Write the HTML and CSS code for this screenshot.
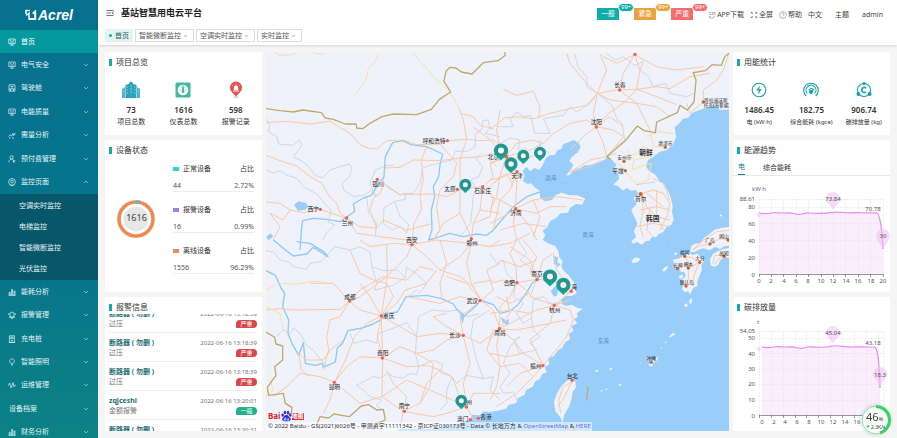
FILE: index.html
```html
<!DOCTYPE html>
<html lang="zh-CN">
<head>
<meta charset="utf-8">
<title>基站智慧用电云平台</title>
<link rel="stylesheet" href="styles.css">
</head>
<body>
<svg class="defs" aria-hidden="true">
  <symbol id="down" viewBox="0 0 6 6"><path d="M1 2l2 2 2-2"/></symbol>
  <symbol id="up" viewBox="0 0 6 6"><path d="M1 4l2-2 2 2"/></symbol>
  <symbol id="screen" viewBox="0 0 8 8"><path d="M.8 1h6.4v4.6H.8zM2.2 7.2h3.6M4 5.6v1.6M2.2 2.4h1.6M2.2 4h3.6M5 2.4h1"/></symbol>
  <symbol id="cabin" viewBox="0 0 8 8"><path d="M1 .8h6v6.4H1zM1 5h6M2.5 5v2M5.5 5v2M2.5 2.4h3M4 2.4V5"/></symbol>
  <symbol id="trend" viewBox="0 0 8 8"><path d="M.6 5.6l1.6-2 1.4 1.6L5 2.2l.9 2.4L7.4 2M1 7h1.6M4 7h2"/></symbol>
  <symbol id="user" viewBox="0 0 8 8"><circle cx="3.6" cy="2.4" r="1.7"/><path d="M.9 7.4c0-4 4.4-4 4.8-1.8M5 5.2l1 1.2 1.2-1.2M6 6.4v1.2M5 6.6h2"/></symbol>
  <symbol id="target" viewBox="0 0 8 8"><circle cx="4" cy="3.9" r="3.4"/><circle cx="4" cy="3.6" r="1.4"/><path d="M2.3 7.4h3.4"/></symbol>
  <symbol id="bars" viewBox="0 0 8 8"><path d="M1.2 7V4.2h1V7zM3.6 7V1.4h1V7zM6 7V3h1v4zM.6 7.4h7"/></symbol>
  <symbol id="bell" viewBox="0 0 8 8"><path d="M2 6V2q2-2 4 0v4zM1 6.2h6M3 7.4h2M.8 2v2M7.2 2v2"/></symbol>
  <symbol id="pile" viewBox="0 0 8 8"><path d="M1.4.8h5v6.6h-5zM.8 7.4h6.4M2.6 2.2h2.6v1.4H2.6zM4 4.6l-.8 1h1.4l-.8 1"/></symbol>
  <symbol id="bulb" viewBox="0 0 8 8"><path d="M3 5.4C.4 3.6 2 .8 4 .8s3.6 2.8 1 4.600zM3.200 6.600h1.600M3.600 7.400h.8"/></symbol>
  <symbol id="pulse" viewBox="0 0 8 8"><path d="M.4 4.600L1.600 2l1.600 5L5 1.600l1.200 4.200 1.200-2.200"/></symbol>
</svg>
<div class="app">
  <aside class="sidebar">
    <div class="logo">
      <svg class="logo-mark" viewBox="0 0 12 12"><path d="M1 5V1.600h4M1 6.500l3-2.300v5.600h6V2.200L7.600 4.600" fill="none" stroke="#fff" stroke-width="1.500"/><path d="M3 11h8.200V1L9.600 2.600v6.800H4.600z" fill="#fff"/></svg>
      <span>Acrel</span>
    </div>
    <nav>
      <ul class="menu">
        <li><a class="row active" href="#"><svg class="ico"><use href="#screen"/></svg><span>首页</span></a></li>
        <li><a class="row" href="#"><svg class="ico"><use href="#screen"/></svg><span>电气安全</span><svg class="arrow"><use href="#down"/></svg></a></li>
        <li><a class="row" href="#"><svg class="ico"><use href="#cabin"/></svg><span>驾驶舱</span><svg class="arrow"><use href="#down"/></svg></a></li>
        <li><a class="row" href="#"><svg class="ico"><use href="#screen"/></svg><span>电能质量</span><svg class="arrow"><use href="#down"/></svg></a></li>
        <li><a class="row" href="#"><svg class="ico"><use href="#trend"/></svg><span>需量分析</span><svg class="arrow"><use href="#down"/></svg></a></li>
        <li><a class="row" href="#"><svg class="ico"><use href="#user"/></svg><span>预付费管理</span><svg class="arrow"><use href="#down"/></svg></a></li>
        <li><a class="row" href="#"><svg class="ico"><use href="#target"/></svg><span>监控页面</span><svg class="arrow"><use href="#up"/></svg></a>
          <ul class="submenu">
            <li><a href="#">空调实时监控</a></li>
            <li><a href="#">电梯监控</a></li>
            <li><a href="#">智能微断监控</a></li>
            <li><a href="#">光伏监控</a></li>
          </ul>
        </li>
        <li><a class="row" href="#"><svg class="ico"><use href="#bars"/></svg><span>能耗分析</span><svg class="arrow"><use href="#down"/></svg></a></li>
        <li><a class="row" href="#"><svg class="ico"><use href="#bell"/></svg><span>报警管理</span><svg class="arrow"><use href="#down"/></svg></a></li>
        <li><a class="row" href="#"><svg class="ico"><use href="#pile"/></svg><span>充电桩</span><svg class="arrow"><use href="#down"/></svg></a></li>
        <li><a class="row" href="#"><svg class="ico"><use href="#bulb"/></svg><span>智能照明</span><svg class="arrow"><use href="#down"/></svg></a></li>
        <li><a class="row" href="#"><svg class="ico"><use href="#pulse"/></svg><span>运维管理</span><svg class="arrow"><use href="#down"/></svg></a></li>
        <li><a class="row" href="#"><span>设备档案</span><svg class="arrow"><use href="#down"/></svg></a></li>
        <li><a class="row" href="#"><svg class="ico"><use href="#bars"/></svg><span>财务分析</span><svg class="arrow"><use href="#down"/></svg></a></li>
      </ul>
    </nav>
  </aside>

  <div class="main">
    <header class="header">
      <div class="topbar">
        <button class="fold" aria-label="折叠菜单"><svg viewBox="0 0 8 8"><path d="M.3 1.500h7.400M.3 4H5M.3 6.500h7.400M7.600 2.800L6 4l1.600 1.200"/></svg></button>
        <h1>基站智慧用电云平台</h1>
        <div class="levels">
          <button class="level teal">一般<i>99+</i></button>
          <button class="level amber">紧急<i>99+</i></button>
          <button class="level coral">严重<i>99+</i></button>
        </div>
        <div class="tools">
          <a href="#"><svg viewBox="0 0 8 8"><path d="M1 1.500h2M1 3.500h2M1 5.500h2M4.500 1.500h2.500v1.800H4.500zM4.500 5h1M6.500 5v1.500M1 7h5"/></svg>APP下载</a>
          <a href="#"><svg class="dark" viewBox="0 0 8 8"><path d="M1.500 1.500l1.300 1.300M6.500 1.500L5.200 2.800M1.500 6.500l1.300-1.300M6.500 6.500L5.200 5.200M1.300 2.400V1.300h1.100M5.600 1.300h1.100v1.100M1.300 5.600v1.100h1.100M5.600 6.700h1.100V5.600"/></svg>全屏</a>
          <a href="#"><svg viewBox="0 0 8 8"><circle cx="4" cy="4" r="3.400"/><path d="M3 3.200q0-1 1-1t1 1q0 .6-1 1.200v.6M4 5.600v.6"/></svg>帮助</a>
          <a href="#">中文</a>
          <a class="wide" href="#">主题</a>
          <a class="wide" href="#">admin</a>
        </div>
      </div>
      <div class="tabs">
        <a class="tab current" href="#"><i class="dot"></i>首页</a>
        <a class="tab" href="#">智能微断监控<i class="x">×</i></a>
        <a class="tab" href="#">空调实时监控<i class="x">×</i></a>
        <a class="tab" href="#">实时监控<i class="x">×</i></a>
      </div>
    </header>

    <main class="board">
      <div class="column">
        <section class="card">
          <h2>项目总览</h2>
          <div class="stats">
            <div class="stat">
              <svg viewBox="0 0 18 18"><path d="M0 17V8l3-2v11zM15 17V6l3 2v9z" fill="#4fb3cf"/><path d="M3.500 17V4l3.500-1v14zM11 17V3l3.500 1v13z" fill="#2b9dc0"/><path d="M7 17V2l2-1.500L11 2v15z" fill="#2aa7b7"/><path d="M4.700 6h1M4.700 9h1M4.700 12h1M8.500 5h1M8.500 8h1M8.500 11h1M12.300 6h1M12.300 9h1M12.300 12h1M1.200 10h.8M16 10h.8" stroke="#bfe9f2" stroke-width="1.200"/></svg>
              <b>73</b><span>项目总数</span>
            </div>
            <div class="stat">
              <svg viewBox="0 0 18 18"><rect x="1.500" y="1.500" width="15" height="15" rx="1.500" fill="#43b99c"/><circle cx="9" cy="9" r="5.300" fill="#fff"/><path d="M9 4.500l1 5.500H8zM5.600 9h1M11.400 9h1M6.500 6l.7.7M11.500 6l-.7.7" fill="#43b99c" stroke="#43b99c" stroke-width=".7"/><circle cx="9" cy="10.800" r="1.300" fill="#43b99c"/></svg>
              <b>1616</b><span>仪表总数</span>
            </div>
            <div class="stat">
              <svg viewBox="0 0 18 18"><ellipse cx="9" cy="16.200" rx="2.500" ry="1" fill="#f9c9c9"/><path d="M9 16C7.500 13 3 11 3 6.600a6 6 0 0 1 12 0C15 11 10.500 13 9 16z" fill="#e8504f"/><path d="M6.800 9V6.800a2.200 2.200 0 0 1 4.400 0V9zM6 9.400h6v1H6z" fill="#fff"/><path d="M9 2.600v1M5.300 4.200l.8.7M12.700 4.200l-.8.7" stroke="#fff" stroke-width=".7"/></svg>
              <b>598</b><span>报警记录</span>
            </div>
          </div>
        </section>

        <section class="card">
          <h2>设备状态</h2>
          <div class="status">
            <svg class="donut" viewBox="0 0 38 38">
              <circle cx="19" cy="19" r="17" fill="none" stroke="#ef8b4f" stroke-width="3.600"/>
              <circle cx="19" cy="19" r="17" fill="none" stroke="#27d3e8" stroke-width="3.600" pathLength="100" stroke-dasharray="2.720 97.280" transform="rotate(-90 19 19)"/>
              <circle cx="19" cy="19" r="17" fill="none" stroke="#9b82ea" stroke-width="3.600" pathLength="100" stroke-dasharray="1 99" transform="rotate(-80 19 19)"/>
              <circle cx="19" cy="19" r="12.500" fill="#e6e6e6"/>
              <text x="19.500" y="21" text-anchor="middle">1616</text>
            </svg>
            <dl class="kinds">
              <div><dt><i class="sw cyan"></i>正常设备<em>占比</em></dt><dd>44<em>2.72%</em></dd></div>
              <div><dt><i class="sw violet"></i>报警设备<em>占比</em></dt><dd>16<em>0.99%</em></dd></div>
              <div><dt><i class="sw orange"></i>离线设备<em>占比</em></dt><dd>1556<em>96.29%</em></dd></div>
            </dl>
          </div>
        </section>

        <section class="card">
          <h2>报警信息</h2>
          <div class="alarms">
            <ul>
              <li><p><b>断路器 ( 勿删 )</b><time>2022-06-16 13:18:39</time></p><p>过压<span class="tag">严重</span></p></li>
              <li><p><b>断路器 ( 勿删 )</b><time>2022-06-16 13:18:39</time></p><p>过压<span class="tag">严重</span></p></li>
              <li><p><b>断路器 ( 勿删 )</b><time>2022-06-16 13:18:39</time></p><p>过压<span class="tag">严重</span></p></li>
              <li><p><b>zqjceshi</b><time>2022-06-16 13:20:01</time></p><p>金额报警<span class="tag mild">一般</span></p></li>
              <li><p><b>断路器 ( 勿删 )</b><time>2022-06-16 13:20:31</time></p></li>
            </ul>
          </div>
        </section>
      </div>

      <section class="map" aria-label="地图">
        <svg class="canvas" viewBox="18 6 1389 1137" preserveAspectRatio="xMidYMid slice">
          <defs>
            <g id="pin"><path d="M0 24C-7 16-18 11-18-1a18 18 0 0 1 36 0C18 11 7 16 0 24z" fill="#12a79b"/><circle cy="-1" r="15" fill="#2a918d"/><circle cy="-1" r="7.500" fill="#eef6fb"/></g>
          </defs>
          <!-- sea, islands and lakes -->
          <path class="sea" transform="translate(690 0)" d="M720 178L690 180 672 166 640 176 618 184 605 190 596 202 578 207 568 220 554 232 558 262 548 284 530 300 508 306 488 322 474 330 468 348 476 362 496 374 508 392 522 402 534 424 542 440 548 470 546 486 551 510 544 524 530 530 520 546 506 552 498 562 486 560 478 572 466 574 456 584 440 576 430 582 424 574 438 562 432 544 442 522 436 506 430 496 424 480 440 462 430 444 446 432 438 420 424 422 410 414 398 422 384 408 370 404 388 386 384 370 370 358 380 344 366 330 352 322 338 334 318 338 300 346 284 346 270 354 256 358 238 376 228 376 244 356 250 344 238 334 246 320 262 308 272 292 266 278 250 270 232 278 220 282 214 296 200 302 196 314 178 316 166 326 158 346 148 360 134 354 120 364 110 350 98 362 104 378 98 392 112 402 124 400 134 412 150 424 150 442 164 454 186 450 196 436 214 428 238 436 262 436 286 446 276 464 258 462 240 474 234 488 212 490 198 504 180 514 172 532 158 542 166 556 158 570 178 582 196 588 206 606 208 622 218 634 214 650 222 664 236 676 248 692 256 704 252 714 260 730 246 738 226 738 212 750 218 764 230 768 246 764 262 774 278 776 260 790 264 800 252 808 262 820 244 828 250 842 236 852 240 868 226 876 216 894 204 900 192 918 174 924 178 942 164 952 170 968 156 972 150 986 136 994 128 1010 108 1020 104 1034 84 1044 78 1060 56 1064 48 1076 22 1082 0 1086-20 1084-30 1096-54 1094-60 1112-82 1114-96 1126-130 1126-150 1134-200 1138-270 1136-290 1150L720 1150z"/>
          <g transform="translate(690 570)" fill="#eff2fb">
            <path d="M238 418L256 424 258 442 248 456 244 480 236 502 222 526 218 548 210 530 196 514 192 486 200 462 212 442 226 426zM424 62l12-10 16 4-8 10-16 4zM582 194l8-4 4 8-8 4zM598 180l8-6v12l-6 8zM536 290l14-12 6 4-14 10zM524 306l6-2-2 8zM512 324l5-2-2 6zM476 376l6-12 12-6 12-10-4 12-12 8-4 12zM314 392l10-2 2 4-8 3zM357 386l9-3 1 5-7 3zM386 434l6-3 3 5-6 3zM328 454l9-4 2 4zM344 448l9-3-3 6zM448 366l5 2-2 4z"/>
          </g>
          <g transform="translate(1080 495)" fill="#eff2fb">
            <path d="M210 110L214 92 226 86 242 84 252 68 268 58 284 44 306 38 330 36V92L312 94 300 102 286 96 268 106 250 100 236 104 222 112zM272 150L270 132 280 116 298 106 312 102 330 98V130L314 126 302 134 294 150 282 156zM158 134L178 130 190 122 208 114 218 120 234 116 240 126 252 138 244 150 246 164 238 184 232 198 232 214 220 218 210 238 204 228 196 232 186 224 190 208 184 194 198 184 192 170 182 172 180 160 166 162zM126 166l12-12 8 2-14 14zM176 184l10-6 4 8-10 6zM162 116l8-4 2 6-8 2zM298 4l4-6 6 6z"/>
          </g>
          <path class="sea" d="M102 464l14-10 20 4 10 12-12 10-20 2zM18 560l14-10 8 10-14 10zM880 618l14 4-2 14 10 8-8 6-12-8zM872 724l14-16 10 4-4 24-10 4zM600 795l8-8 6 10-6 24zM722 800l16 12 10-6-4 20-16-8z"/>
          <!-- rivers -->
          <path class="river" d="M120 600L124 540 128 512 160 505 200 508 240 515 262 500 284 484 280 462 310 444 334 436 350 410 372 380 376 320 398 278 430 272 452 284 500 290 548 312 540 344 536 380 520 410 524 440 514 480 516 540 506 570 540 560 568 550 610 560 650 552 680 556 700 540 720 516 760 470 800 440 840 426M18 662L46 676 62 712 74 730 68 770 86 810 84 850 96 880 116 916 130 878 136 940 168 946 186 940 190 952 226 936 232 894 248 880 264 842 306 834 340 822 364 808 384 790 412 786 438 740 500 736 546 746 580 762 590 778 612 800 620 792 650 766 660 750 700 764 720 790 752 782 774 764 800 728 816 700 838 680M40 570L76 600 100 618 140 612 160 592 204 620 190 604 150 580 110 575"/>
          <!-- provincial borders -->
          <g class="prov">
            <path d="M18 206L30 226 24 244 52 262 56 282 100 286 118 270 126 284 100 322 124 332 146 350 166 376 188 384 210 360 240 350 268 342 276 354 268 380 246 400 252 420 280 440 316 434 334 420 348 440 330 400 346 360 376 348 400 346M18 360L40 370 60 362 80 376 110 384 130 410 170 432 196 462 214 480 204 516 224 524 200 548 188 570M376 348L370 396 380 410 420 434 436 430 436 448 404 454 372 474 370 520 396 540 420 530 440 550 446 524 420 500 404 456M320 444L326 490 350 520 346 556M436 430L460 430 480 400 488 354 510 346 552 336 576 330 586 304 620 304 646 290 646 252 666 238 668 212 684 210 690 232 676 250 720 260M664 310L648 326 668 350 656 380 632 390 648 414 640 440 636 480 632 520 600 560M18 602L40 606 60 630 88 636 100 650 140 658 150 640 184 634 224 590 270 600 300 590 330 606 336 650 350 700 344 720 400 706 436 682 440 652 470 672 500 700 480 730 470 720 430 750M336 650L370 662 412 660 436 682M50 860L70 838 90 850 100 834 120 850 140 886 160 900 180 926 196 944 180 926M270 850L282 880 320 870 350 880 354 850 396 836 440 818 470 860 466 910 476 950 470 974 450 970 430 984 400 980 384 970 360 984 340 980 290 1006 310 1020 330 1040 366 1050 350 1066 376 1090M470 860L476 800 516 780 560 784 598 780 620 800 656 792M476 950L520 930 548 944 540 968 576 980 590 1000 620 976 670 986 650 930 632 860 640 810 690 780M576 980L560 1020 560 1060 540 1080M670 986L700 980 690 1020 720 1050"/>
            <path transform="translate(690 0)" d="M254 12L264 50 290 80 290 110 322 130 366 166 380 206 396 220 404 270 370 296M350 12L376 30 400 20 434 46 460 34 450 60 476 80 490 110 526 100 540 130 590 140 612 130M322 130L300 160 260 186 240 170 220 196 160 206 180 250 134 250 122 196 100 200 80 186 60 206 70 230 20 230M40 310L30 280 60 264 90 270 84 300 110 296M150 270L150 290 178 310M0 330L20 350M350 320L380 310"/>
            <path transform="translate(690 570)" d="M0 42L20 70 40 60 50 100 78 130 70 170 100 190 80 220 100 250 124 234 130 270 150 290 120 310 140 330 90 340 70 300 90 290 60 320 40 370 60 400 30 440 40 460 70 456 84 486M124 234L130 180 160 170 180 190 210 190M84 0L110 40 90 60 120 80 130 110 180 130M230 180L296 166"/>
          </g>
          <!-- roads -->
          <g class="road">
            <path d="M18 218L80 214 150 222 210 214 240 232 270 250 300 284 330 296 352 296 380 272 430 270 470 284 540 282 562 272 620 268 664 272 700 270 740 300M18 316L60 332 110 348 150 380 186 400 206 436 230 460 240 490 262 506 300 530 350 534 370 510 440 540 520 520M18 456L60 460 90 480 130 488 180 478 262 506M90 480L70 510 30 490 60 530 40 570M262 506L290 550 360 560 440 570 456 580M352 388L372 400 360 430 340 444 330 480 350 534M376 354L420 352 460 330 540 332 600 324 660 320 700 310M372 400L420 434 520 432 560 440 600 420M484 330L490 390 480 430 484 480 462 520 456 580M500 290L484 330M540 282L590 340 580 380 540 420 530 470 540 540 520 570M596 172L610 210 620 268 600 330 600 420 600 490 620 530 634 566M604 190L640 200 660 226 700 236M640 232L690 268M592 418L668 410 700 380 690 340 720 330M668 410L660 480 640 520 634 566M600 490L550 520 520 570M668 410L700 440 690 500 640 520M660 480L720 490M700 400L740 370 760 410M720 180L710 240 720 300M680 420L720 380"/>
            <path d="M456 584L400 580 330 590 300 570M456 584L440 620 380 680 300 740 268 754M456 584L500 620 540 660 600 680 640 710 664 752M456 584L530 570 634 580 620 640 634 700 664 752M380 584L382 680 364 798M268 754L220 700 150 700M268 754L300 720 370 680 440 690 480 650 520 660M268 754L300 780 364 798 410 760 436 720 500 700 530 660M18 780L60 776 100 780 240 778 268 754M268 754L240 800 210 810 200 860 206 900 190 960M364 798L320 820 284 860 256 930 224 996M364 798L330 740 300 700M364 798L400 740 380 700 340 690 300 670 270 600M364 798L368 924 366 1040 430 1084M364 798L420 830 470 860 540 850 610 856M364 798L352 860 368 924M368 924L300 920 260 950 224 996M368 924L420 890 470 910 520 900 560 870 610 856M368 924L440 950 500 946 540 960 576 980 610 1070M224 996L180 980 120 970 80 1010 40 1040M224 996L210 1050 190 1090M224 996L300 1060 366 1040 440 990 510 1020 620 1070M430 1084L480 1060 510 1010 520 940 470 910M430 1084L440 1040 400 1000 380 960M430 1084L420 1130M430 1084L520 1100 560 1090 620 1070M620 1070L640 1030 720 1030M620 1070L610 1000 630 940 610 856M620 1070L640 1110 660 1110M610 856L600 800 664 752M610 856L660 880 720 836M610 856L560 830 520 800 560 790M664 752L600 740 540 760 440 740M664 752L700 720 680 660 720 640M664 752L700 780 720 836M634 580L690 590 720 570M634 580L600 620 540 660M540 570L560 640 540 700 546 750M640 700L700 690M116 910L140 930 190 930 210 900 250 870M116 910L124 960 150 980M700 836L680 900 720 950M540 960L500 1000 480 1060M664 752L620 700 560 680"/>
            <path transform="translate(690 0)" d="M0 238L44 204 80 200 130 206 180 190 240 176 290 166 322 130M40 118L80 136 130 124 150 170 146 206M322 130L290 100 240 40 230 10M322 130L380 120 440 118 500 110 540 116 600 80 660 70M322 130L350 60 330 12M322 130L360 150 440 160 500 170 540 200M388 120L400 70 434 14M388 120L440 160 480 240M322 130L310 190 318 230 356 190 400 160 440 118M434 14L450 60 440 118M434 14L500 50 560 60 640 50M434 14L380 40 340 20M440 118L500 140 560 164M318 230L290 210 240 220 190 250 160 280 120 300 48 320M318 230L280 260 240 300M318 230L370 240 400 260 350 320M318 230L340 280 350 320 300 330 240 366M318 230L360 200 400 230M48 320L20 290 0 270M48 320L80 280 130 270 160 280M48 320L100 330 150 310M48 320L80 364 80 410 76 476M48 320L30 380 20 440 0 480M48 320L0 340M80 364L40 380 0 390M80 364L60 420 30 450 10 540M76 476L30 450 0 440M76 476L130 450 200 440 280 450M76 476L140 490 180 470 230 470M76 476L70 520 80 570M76 476L40 500 0 520M76 476L120 530 140 570M130 450L150 500 130 560M30 540L100 520 170 530M640 156L600 190 590 160M640 156L640 120 680 90 700 60 717 10M240 366L300 350 340 330"/>
            <path transform="translate(690 0)" d="M456 430L490 420 520 430 540 460 530 500 510 540M456 430L470 470 500 500 540 510M456 430L460 480 450 530 460 560M500 420L500 500 520 540M450 480L500 470 540 480M440 530L490 520 540 530M470 430L520 470M480 470L470 540 490 560M540 450L520 400 490 386"/>
            <path transform="translate(690 570)" d="M0 20L60 10 120 -20M80 0L60 40 78 80 80 128M80 128L40 120 0 130M80 128L140 118 190 120 244 152 194 196M140 118L120 60 60 20M140 118L160 60 190 40 200 90 244 152M140 118L120 170 194 196M80 128L60 170 30 200 28 266M194 196L140 210 80 240 28 266M194 196L240 180M194 196L240 210 250 240 230 290 190 340 160 376M194 196L180 250 120 300 160 376M28 266L80 270 130 260 180 250 230 240M28 266L70 300 100 340 160 376M28 266L20 320 30 380 20 440 0 480M28 266L0 300M100 340L50 350 0 340M160 376L130 410 80 460 20 500M160 376L90 400 50 440M80 128L120 160 60 190 20 170M100 0L140 50 120 100M30 60L90 80 140 60M28 266L60 220 50 170M0 220L60 210 120 220M230 160L260 140M30 380L90 370 130 410M252 424L220 440 206 480 212 520M246 424L224 470 204 500"/>
            <path transform="translate(1080 495)" d="M193 124L206 140 204 160 206 190 198 212M193 124L216 128 238 142 228 166 220 190 222 212M172 160L190 150 204 160 238 142M218 104L240 92 270 88 296 72 327 72M218 104L250 76 290 50 327 46M296 72L312 52M278 146L284 122 312 118 327 108M312 118L296 132 284 148"/>
          </g>
          <path class="road pale" d="M356 12L344 38 326 54 318 90 286 134M458 8L486 40 520 80 570 126 596 172M40 6L60 16 100 14 110 6M160 8l24 6 12-6M18 720L36 712 50 700M60 700L110 702 160 694 200 698M18 770L60 790 70 840 90 870M18 1040L40 1020 30 990M1160 260L1200 244 1242 252M1080 300L1100 320 1130 310 1150 290 1170 300 1170 320 1122 330 1116 360 1140 350 1174 340 1164 390 1130 404 1096 364 1076 340M1170 250L1180 290 1216 290 1240 270M1120 330L1100 300"/>
          <!-- national borders -->
          <path class="nation" d="M18 176L60 182 100 186 128 180 184 188 196 204 220 208 256 222 288 222 290 234 308 236 330 220 366 200 400 192 470 194 514 178 538 148 572 126 552 94 558 64 570 52 588 54 604 66 636 72 670 38 714 32 736 16 734 6M1407 10L1394 20 1384 46 1356 44 1336 62 1300 68 1308 90 1302 156 1282 180 1260 166 1252 188 1190 216 1186 248 1152 242 1132 228 1096 272 1040 320 1052 328M18 846L44 862 48 882 68 888 68 930 44 950 48 976 22 1012 26 1036 70 1030 76 1060 96 1072 94 1090 70 1100M170 1124L180 1100 206 1104 222 1092 268 1100 304 1068 326 1064 350 1080 370 1078 376 1110 350 1120 340 1136M984 1010L980 1052M936 1142L950 1130"/>
          <path class="ferry" d="M1130 404L1186 396M900 398h20M1218 592L1228 565"/>
          <g fill="#e9605c">
            <circle cx="562" cy="272" r="5"/><circle cx="352" cy="388" r="5"/><circle cx="181" cy="478" r="5"/><circle cx="260" cy="504" r="5"/><circle cx="592" cy="418" r="5"/><circle cx="668" cy="410" r="5"/><circle cx="634" cy="566" r="5"/><circle cx="1125" cy="13" r="5"/><circle cx="1079" cy="120" r="5"/><circle cx="1009" cy="231" r="5"/><circle cx="771" cy="365" r="5"/><circle cx="767" cy="476" r="5"/><circle cx="739" cy="320" r="6"/><circle cx="456" cy="584" r="5"/><circle cx="269" cy="753" r="5"/><circle cx="364" cy="798" r="5"/><circle cx="660" cy="752" r="5"/><circle cx="610" cy="856" r="5"/><circle cx="367" cy="924" r="5"/><circle cx="223" cy="997" r="5"/><circle cx="433" cy="1084" r="5"/><circle cx="619" cy="1071" r="5"/><circle cx="631" cy="1109" r="5"/><circle cx="655" cy="1105" r="5"/><circle cx="771" cy="698" r="5"/><circle cx="831" cy="689" r="5"/><circle cx="883" cy="766" r="5"/><circle cx="934" cy="724" r="5"/><circle cx="718" cy="836" r="5"/><circle cx="849" cy="947" r="5"/><circle cx="936" cy="991" r="5"/>
          </g>
          <g fill="#c46a2d">
            <circle cx="1330" cy="156" r="5"/><circle cx="1216" cy="292" r="5"/><circle cx="1092" cy="334" r="5"/><circle cx="1096" cy="362" r="5"/><circle cx="1142" cy="432" r="6"/><circle cx="1350" cy="582" r="5"/><circle cx="1404" cy="570" r="5"/><circle cx="1274" cy="619" r="5"/><circle cx="1319" cy="637" r="5"/><circle cx="1392" cy="619" r="5"/><circle cx="1252" cy="656" r="5"/><circle cx="1285" cy="654" r="5"/><circle cx="1278" cy="708" r="5"/><circle cx="1174" cy="937" r="5"/>
          </g>
          <g class="city">
            <text x="522" y="278">呼和浩特</text><text x="354" y="409">银川</text><text x="160" y="484">西宁</text><text x="262" y="524">兰州</text><text x="570" y="424">太原</text><text x="668" y="430">石家庄</text><text x="456" y="575">西安</text><text x="636" y="586">郑州</text><text x="700" y="326">北京</text><text x="771" y="384">天津</text><text x="768" y="496">济南</text><text x="1080" y="112">长春</text><text x="1009" y="222">沈阳</text>
            <text x="270" y="746">成都</text><text x="386" y="804">重庆</text><text x="637" y="759">武汉</text><text x="585" y="862">长沙</text><text x="368" y="915">贵阳</text><text x="223" y="1018">昆明</text><text x="433" y="1075">南宁</text><text x="628" y="1063">州</text><text x="608" y="1112">澳门</text><text x="678" y="1108">香港</text><text x="748" y="704">合肥</text><text x="831" y="679">南京</text><text x="942" y="717">海</text><text x="884" y="787">杭州</text><text x="720" y="856">南昌</text><text x="827" y="953">福州</text><text x="937" y="983">台北</text><text x="1142" y="452">首尔</text>
            <text x="1074" y="368">平壤</text>
          </g>
          <g class="city small">
            <text x="1368" y="155">符拉迪沃斯</text><text x="1370" y="170">托克(海参崴)</text><text x="1216" y="286">清津市</text><text x="1093" y="327">安州市</text><text x="1274" y="613">福冈</text><text x="1320" y="630">大分</text><text x="1254" y="650">长崎</text><text x="1285" y="648">熊本</text><text x="1280" y="703">鹿儿岛</text><text x="1174" y="930">冲绳</text><text x="1350" y="576">广岛</text><text x="1392" y="564">冈山</text><text x="1392" y="614">高知</text>
          </g>
          <g class="country"><text x="1158" y="316">朝鲜</text><text x="1178" y="513">韩国</text></g>
          <g class="ocean"><text x="872" y="389">渤海</text><text x="984" y="560">黄海</text><text x="1030" y="880">东海</text></g>
          <use href="#pin" transform="translate(723 303) scale(1.200)"/><use href="#pin" transform="translate(753 343) scale(1.100)"/><use href="#pin" x="790" y="318"/><use href="#pin" x="840" y="309"/><use href="#pin" x="616" y="405"/><use href="#pin" transform="translate(870 681) scale(1.200)"/><use href="#pin" transform="translate(910 706) scale(1.200)"/><use href="#pin" x="604" y="1053"/>
        </svg>
        <div class="credit">
          <div class="baidu"><b>Bai</b><svg viewBox="0 0 12 12"><g fill="#2b2fe0"><ellipse cx="1.800" cy="5" rx="1.400" ry="1.800"/><ellipse cx="4.300" cy="2.200" rx="1.400" ry="1.900"/><ellipse cx="7.700" cy="2.200" rx="1.400" ry="1.900"/><ellipse cx="10.200" cy="5" rx="1.400" ry="1.800"/><path d="M6 4.800c2 0 2.400 2 4 3.200 1.800 2 .4 4-4 3.800-4.400.2-5.800-1.800-4-3.800C3.600 6.800 4 4.800 6 4.800z"/></g><path d="M4.800 7.600v3H3.400V9h1.400M6.600 8.400v2.200h1.800V8.400" fill="none" stroke="#fff" stroke-width=".7"/></svg><b>地图</b></div>
          <p>© 2022 Baidu - GS(2021)6026号 - 甲测资字11111342 - 京ICP证030173号 - Data © 长地万方 &amp; <a href="#">OpenStreetMap</a> &amp; <a href="#">HERE</a></p>
        </div>
      </section>

      <div class="column">
        <section class="card">
          <h2>用能统计</h2>
          <div class="stats">
            <div class="stat line">
              <svg viewBox="0 0 18 18"><circle cx="9" cy="9" r="6.800"/><path d="M10 4.500L6.300 9.600h2.400L8 13.500l3.800-5.300H9.200z" fill="#12a5a8" stroke="none"/></svg>
              <b>1486.45</b><span>电 (kW·h)</span>
            </div>
            <div class="stat line">
              <svg viewBox="0 0 18 18"><path d="M4.200 15A7.300 7.300 0 1 1 13.800 15M5.300 12.500a5 5 0 1 1 7.400 0"/><path d="M6.800 9.400a2.600 2.600 0 0 1 4-1.400M9 10.800L12 8"/><circle cx="9" cy="11" r="1.400" fill="#12a5a8"/></svg>
              <b>182.75</b><span>综合能耗 (kgce)</span>
            </div>
            <div class="stat line">
              <svg viewBox="0 0 18 18"><circle cx="9" cy="9" r="6.500"/><path d="M11 7.200A2.500 2.500 0 1 0 11 10.800" stroke-width="1.500"/><g fill="#12a5a8" stroke="none"><circle cx="9" cy="2.500" r="1.600"/><circle cx="3.400" cy="13" r="2"/><circle cx="14.600" cy="13" r="2"/></g></svg>
              <b>906.74</b><span>碳排放量 (kg)</span>
            </div>
          </div>
        </section>

        <section class="card">
          <h2>能源趋势</h2>
          <div class="switch"><button class="on">电</button><button>综合能耗</button></div>
          <svg class="chart" viewBox="733 176 157 116">
            <g class="grid"><path d="M759 199.500H883M759 207.500H883M759 223.500H883M759 240.500H883M759 257.500H883M771.500 199V275M783.500 199V275M796.500 199V275M808.500 199V275M821.500 199V275M833.500 199V275M845.500 199V275M858.500 199V275M870.500 199V275M883.500 199V275M759.500 199V275"/></g>
            <path class="area" d="M759 213.200C764 213.800 768 213.600 771 213S779 213 784 213 790 212.500 796 214 803 212.500 809 213 827 213.200 833 212.300 846 213.400 852 212.800 864 213.200 876 212.800Q881 212 883 249V275H759z"/>
            <path class="curve" d="M759 213.200C764 213.800 768 213.600 771 213S779 213 784 213 790 212.500 796 214 803 212.500 809 213 827 213.200 833 212.300 846 213.400 852 212.800 864 213.200 876 212.800Q881 212 883 249"/>
            <path class="axis" d="M759 274.500H883M759.500 274V277M771.500 274V277M783.500 274V277M796.500 274V277M808.500 274V277M821.500 274V277M833.500 274V277M845.500 274V277M858.500 274V277M870.500 274V277M883.500 274V277"/>
            <path class="bubble" d="M833 210C831 205 826 203 826 199a7 7 0 0 1 14 0C840 203 835 205 833 210zM883 249C881 245 876 240 876 236a7 7 0 0 1 14 0C890 240 885 245 883 249z"/>
            <circle class="bubble" cx="759" cy="215" r="2"/>
            <g class="num"><text x="759" y="191" class="unit">kW·h</text>
              <g class="end"><text x="755" y="201">88.61</text><text x="755" y="209">80</text><text x="755" y="226">60</text><text x="755" y="243">40</text><text x="755" y="260">20</text><text x="755" y="277">0</text></g>
              <g class="mid"><text x="759" y="283">0</text><text x="771" y="283">2</text><text x="784" y="283">4</text><text x="796" y="283">6</text><text x="808" y="283">8</text><text x="821" y="283">10</text><text x="833" y="283">12</text><text x="846" y="283">14</text><text x="858" y="283">16</text><text x="871" y="283">18</text><text x="883" y="283">20</text><text x="833" y="201">73.84</text><text x="873" y="211">70.78</text><text x="883" y="238">30</text></g></g>
          </svg>
        </section>

        <section class="card">
          <h2>碳排放量</h2>
          <svg class="chart" viewBox="733 312 157 119">
            <g class="grid"><path d="M759 331.500H884M759 338.500H884M759 353.500H884M759 369.500H884M759 384.500H884M759 400.500H884M759.500 332V416M771.500 332V416M783.500 332V416M795.500 332V416M806.500 332V416M818.500 332V416M830.500 332V416M842.500 332V416M854.500 332V416M866.500 332V416M878.500 332V416M884 332V416"/></g>
            <path class="area" d="M762 346.800C766 348.200 769 347.800 774 347S782 347.200 786 347 792 346.200 798 348 804 346.300 810 346.800 828 347.200 833 346 846 347.600 852 347 864 347.400 874 346.800Q879 346 880 388V416H762z"/>
            <path class="curve" d="M762 346.800C766 348.200 769 347.800 774 347S782 347.200 786 347 792 346.200 798 348 804 346.300 810 346.800 828 347.200 833 346 846 347.600 852 347 864 347.400 874 346.800Q879 346 880 388"/>
            <path class="axis" d="M759 415.500H884M759.500 415V418M771.500 415V418M783.500 415V418M795.500 415V418M806.500 415V418M818.500 415V418M830.500 415V418M842.500 415V418M854.500 415V418"/>
            <path class="bubble" d="M833 344C831 339 826 337 826 333a7 7 0 0 1 14 0C840 337 835 339 833 344zM880 386C878 381 873 378 873 374a7 7 0 0 1 14 0C887 378 882 381 880 386z"/>
            <circle class="bubble" cx="759" cy="349" r="2"/>
            <g class="num"><text x="758" y="324" class="unit">t</text>
              <g class="end"><text x="755" y="333">54.05</text><text x="755" y="340">50</text><text x="755" y="356">40</text><text x="755" y="371">30</text><text x="755" y="386">20</text><text x="755" y="402">10</text><text x="755" y="418">0</text></g>
              <g class="mid"><text x="762" y="424">0</text><text x="774" y="424">2</text><text x="785" y="424">4</text><text x="797" y="424">6</text><text x="809" y="424">8</text><text x="821" y="424">10</text><text x="833" y="424">12</text><text x="845" y="424">14</text><text x="857" y="424">16</text><text x="833" y="335">45.04</text><text x="873" y="345">43.18</text><text x="880" y="377">18.3</text></g></g>
          </svg>
        </section>
      </div>
    </main>
  </div>
</div>
<div class="meter">
  <svg viewBox="0 0 30 30"><circle cx="15" cy="15" r="14" fill="#f7fbf7" stroke="#7fe09b"/><path d="M15 1.500A13.500 13.500 0 0 1 19 27.900" fill="none" stroke="#37d567" stroke-width="3"/><text class="pct" x="5" y="16">46<tspan class="sign">%</tspan></text><path d="M5.500 20.500l1.500 2.500 1.500-2.500z" fill="#2ac45a"/><text class="rate" x="10" y="24">2.3K/s</text></svg>
</div>
</body>
</html>
```
FILE: styles.css
```css
* { box-sizing: border-box; margin: 0; padding: 0; }
body {
  font: 7px/10px "Noto Sans", "Noto Sans CJK SC", sans-serif;
  color: #333;
  background: #f5f5f5;
}
ul { list-style: none; }
a { color: inherit; text-decoration: none; }
i, em { font-style: normal; }
button { font: inherit; color: inherit; border: 0; background: none; }
svg { display: block; }
.defs { position: absolute; width: 0; height: 0; }

.app { display: flex; height: 100vh; overflow: hidden; }

/* sidebar */
.sidebar {
  flex: none;
  width: 98px;
  display: flex;
  flex-direction: column;
  color: #e3f3f5;
  background: linear-gradient(#06718f 0%, #07758c 60%, #0b8284 100%);
}
.logo {
  flex: none;
  height: 30px;
  display: flex;
  align-items: center;
  justify-content: center;
  gap: 1px;
  color: #fff;
  font: italic bold 14px/20px "Liberation Sans", sans-serif;
}
.logo-mark { width: 12px; height: 12px; }
nav { flex: 1; display: flex; margin-bottom: -6px; }
.menu { flex: 1; display: flex; flex-direction: column; justify-content: space-between; }
.row {
  display: flex;
  align-items: center;
  gap: 4px;
  height: 23px;
  padding: 0 9px 0 8px;
}
.row.active { background: #05989d; color: #fff; }
.ico, .arrow { fill: none; stroke: currentColor; flex: none; }
.ico { width: 8px; height: 8px; stroke-width: .7; }
.row span { padding-left: 1px; }
.arrow { width: 6px; height: 6px; margin-left: auto; stroke-width: .7; opacity: .75; }
.submenu { background: #07566a; padding: 1px 0; }
.submenu a { display: block; padding-left: 19px; line-height: 21px; }

/* header */
.main { flex: 1; min-width: 0; display: flex; flex-direction: column; }
.header { flex: none; height: 45px; background: #fff; box-shadow: 0 1px 2px #0002; }
.topbar { display: flex; align-items: center; height: 29px; padding: 0 14px 4px 8px; }
.fold svg { width: 8px; height: 8px; fill: none; stroke: #555; stroke-width: .8; }
h1 { font-size: 9px; line-height: 12px; margin-left: 7px; color: #222; }
.levels { display: flex; gap: 15px; margin-left: auto; padding-top: 3px; }
.level { position: relative; width: 22px; height: 12px; line-height: 12px; color: #fff; }
.level i {
  position: absolute;
  left: 21px;
  top: -5px;
  width: 16px;
  border: 1px solid #fff;
  border-radius: 5px;
  font-size: 6px;
  line-height: 7px;
  background: inherit;
}
.teal { background: #0fada8; }
.amber { background: #e8a33d; }
.coral { background: #f46c6e; }
.tools { display: flex; gap: 6px; padding: 4px 0 0 15px; color: #444; }
.tools a { display: flex; align-items: center; gap: 1px; }
.tools svg { width: 8px; height: 8px; fill: none; stroke: #888; stroke-width: .6; }
.tools .dark { stroke: #333; }
.tools .wide { padding-left: 7px; }
.tabs { display: flex; gap: 2px; padding-left: 7px; }
.tab {
  display: flex;
  align-items: center;
  height: 13px;
  padding: 0 3px;
  border: 1px solid #ddd;
  color: #555;
}
.tab.current { border-color: #e2f5f4; background: #e2f5f4; color: #1b5f63; gap: 3px; }
.dot { width: 3px; height: 3px; border-radius: 50%; background: #12ada9; }
.x { width: 9px; text-align: center; color: #aaa; font-size: 6px; }

/* board */
.board {
  flex: 1;
  min-height: 0;
  display: grid;
  grid-template-columns: 157fr 463fr 157fr;
  grid-template-rows: 100%;
  gap: 4px;
  padding: 7px;
}
.column { min-width: 0; display: grid; grid-template-rows: 83fr 152fr 134fr; gap: 5px; }
.card { min-width: 0; min-height: 0; background: #fff; overflow: hidden; display: flex; flex-direction: column; }
h2 {
  flex: none;
  display: flex;
  align-items: center;
  gap: 4px;
  padding: 5px 4px 0;
  font-size: 8px;
  line-height: 10px;
  font-weight: 400;
  color: #333;
}
h2::before { content: ""; width: 3px; height: 7px; background: #0fada8; }

.stats { display: grid; grid-template-columns: repeat(3, 1fr); padding-top: 14px; }
.stat { display: flex; flex-direction: column; align-items: center; white-space: nowrap; }
.stat svg { width: 18px; height: 18px; }
.stat b { font-size: 8px; line-height: 12px; padding-top: 5px; font-weight: 600; }
.stat span { line-height: 12px; }
.line svg { fill: none; stroke: #12a5a8; stroke-width: 1.1; }
.line span { font-size: 6px; }

.status { flex: 1; display: flex; align-items: center; padding: 0 8px 10px 12px; gap: 18px; }
.donut { width: 38px; height: 38px; flex: none; overflow: visible; }
.donut text { font-size: 9px; fill: #444; }
.kinds { flex: 1; display: flex; flex-direction: column; gap: 13px; }
.kinds > div { border-bottom: 1px solid #eee; }
.kinds dt, .kinds dd { display: flex; align-items: center; }
.kinds dd { padding-top: 7px; color: #555; }
.kinds em { margin-left: auto; }
.sw { width: 6px; height: 4px; margin-right: 4px; }
.cyan { background: #27d3e8; }
.violet { background: #9b82ea; }
.orange { background: #ef8b4f; }

.alarms { flex: 1; min-height: 0; overflow: hidden; margin: 2px 5px 0 4px; }
.alarms ul { margin-top: -10px; }
.alarms li { height: 29px; padding-top: 5px; border-bottom: 1px solid #eee; color: #777; }
.alarms p { display: flex; align-items: center; justify-content: space-between; }
.alarms b { color: #1f6f74; font-weight: 700; }
.alarms time { font-size: 6px; }
.tag {
  width: 21px;
  border-radius: 4px 4px 4px 1px;
  background: #d9464b;
  color: #fff;
  line-height: 8px;
  font-size: 6px;
  text-align: center;
}
.mild { background: #26b08a; }

/* map */
.map { position: relative; min-width: 0; min-height: 0; overflow: hidden; background: #eff2fb; }
.canvas { width: 100%; height: 100%; }
.sea { fill: #9acefa; }
.river, .prov, .road, .nation, .ferry { fill: none; stroke-linejoin: round; }
.river { stroke: #8fcaf6; stroke-width: 4; }
.prov { stroke: #c6c9d6; stroke-width: 2; }
.road { stroke: #fbcaa6; stroke-width: 3; }
.pale { stroke: #fae0a6; }
.nation { stroke: #bfaa6c; stroke-width: 4; }
.ferry { stroke: #9bb0c4; stroke-width: 2; stroke-dasharray: 5 3; }
.city text, .country text, .ocean text { text-anchor: middle; }
.city { font-size: 17px; fill: #222; }
.small { font-size: 14px; }
.country { font-size: 20px; font-weight: 700; fill: #333; }
.ocean { font-size: 17px; fill: #5d8fc0; }
.credit { position: absolute; left: 0; bottom: 0; color: #333; }
.credit p { padding: 0 2px; font-size: 6px; line-height: 9px; white-space: nowrap; background: #fff8; }
.credit a { color: #6f6fd8; }
.baidu { display: flex; align-items: center; padding-left: 2px; color: #e02027; }
.baidu b { font-size: 8px; line-height: 12px; }
.baidu b:last-child { font-size: 6px; line-height: 7px; background: #e02027; color: #fff; }
.baidu svg { width: 11px; height: 12px; }

/* charts */
.switch { display: flex; gap: 18px; margin-top: 6px; padding: 0 5px; border-bottom: 1px solid #e8e8e8; }
.switch button { line-height: 12px; padding-bottom: 1px; }
.switch .on { color: #11808a; border-bottom: 1px solid #11808a; }
.chart { flex: 1; width: 100%; min-height: 0; }
.grid { stroke: #e6e2ea; stroke-width: .6; stroke-dasharray: 2 1; }
.area { fill: #f6dffa; fill-opacity: .55; }
.curve { fill: none; stroke: #e989e9; stroke-width: 1.2; }
.axis { fill: none; stroke: #6e7079; stroke-width: .7; }
.bubble { fill: #f0c4f2; fill-opacity: .6; }
.num { font-size: 6px; fill: #555; }
.unit { fill: #5f6b8c; text-anchor: middle; }
.end { text-anchor: end; }
.mid { text-anchor: middle; }

/* floating speed meter */
.meter { position: fixed; right: 6px; bottom: 3px; width: 30px; height: 30px; border-radius: 50%; box-shadow: 0 0 3px #0003; }
.pct { font-size: 11px; fill: #444; }
.sign { font-size: 6px; }
.rate { font-size: 5px; fill: #444; }
```
